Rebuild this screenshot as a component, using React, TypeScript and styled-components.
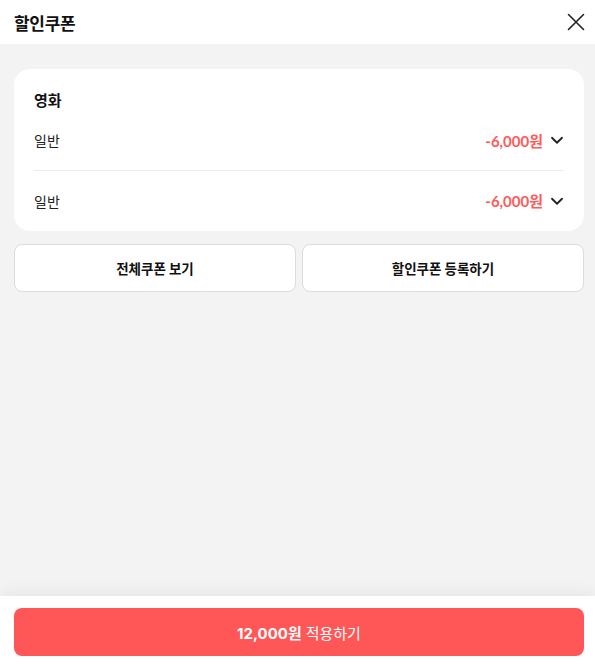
import styled, { createGlobalStyle } from "styled-components";

const GlobalStyle = createGlobalStyle`
  html, body {
    margin: 0;
    padding: 0;
  }
  body {
    font-family: "Inter", "Noto Sans CJK KR", sans-serif;
    color: #111;
  }
  * {
    box-sizing: border-box;
  }
`;

const Page = styled.div`
  width: 595px;
  height: 666px;
  display: flex;
  flex-direction: column;
  background: #f3f3f3;
`;

const Header = styled.div`
  height: 44px;
  background: #fff;
  display: flex;
  align-items: center;
  justify-content: space-between;
  padding: 0 7px 0 14px;
`;

const Title = styled.h1`
  margin: 0;
  font-size: 17px;
  font-weight: 700;
  font-family: "Noto Sans CJK KR", sans-serif;
  letter-spacing: -0.3px;
`;

const CloseButton = styled.button`
  border: none;
  background: none;
  padding: 0;
  width: 24px;
  height: 24px;
  display: flex;
  align-items: center;
  justify-content: center;
  cursor: pointer;
  color: #222;
`;

const Content = styled.div`
  flex: 1;
  padding: 25px 11px 0 14px;
  display: flex;
  flex-direction: column;
  gap: 13px;
`;

const Card = styled.div`
  background: #fff;
  border-radius: 16px;
  padding: 19px 20px 1px;
`;

const CardTitle = styled.div`
  height: 22px;
  display: flex;
  align-items: center;
  font-size: 15px;
  font-weight: 700;
  font-family: "Noto Sans CJK KR", sans-serif;
`;

const Row = styled.div<{ $divider?: boolean }>`
  height: 60px;
  display: flex;
  align-items: center;
  justify-content: space-between;
  border-top: ${(p) => (p.$divider ? "1px solid #ececec" : "none")};
`;

const Label = styled.span`
  font-size: 14px;
  font-family: "Noto Sans CJK KR", sans-serif;
  color: #222;
`;

const Price = styled.span`
  display: flex;
  align-items: center;
  gap: 7px;
  font-family: "Lato", "Noto Sans CJK KR", sans-serif;
  font-weight: 700;
  font-size: 15px;
  color: #ff5a5a;
`;

const ButtonRow = styled.div`
  display: grid;
  grid-template-columns: 1fr 1fr;
  gap: 6px;
`;

const OutlineButton = styled.button`
  height: 48px;
  background: #fff;
  border: 1px solid #dcdcdc;
  border-radius: 8px;
  font-family: "Noto Sans CJK KR", sans-serif;
  font-size: 13.5px;
  font-weight: 700;
  color: #111;
  cursor: pointer;
`;

const Footer = styled.div`
  height: 70px;
  background: #fff;
  padding: 12px 11px 10px 14px;
  box-shadow: 0 -4px 14px rgba(0, 0, 0, 0.05);
`;

const ApplyButton = styled.button`
  width: 100%;
  height: 48px;
  border: none;
  border-radius: 8px;
  background: #ff5757;
  color: #fff;
  font-family: "Inter", "Noto Sans CJK KR", sans-serif;
  font-size: 15px;
  cursor: pointer;
  display: flex;
  align-items: center;
  justify-content: center;
  gap: 4px;

  strong {
    font-weight: 700;
  }
  span {
    font-family: "Noto Sans CJK KR", sans-serif;
    font-weight: 400;
  }
`;

const Chevron = () => (
  <svg width="14" height="14" viewBox="0 0 14 14" fill="none" stroke="#222" strokeWidth="1.8" strokeLinecap="round" strokeLinejoin="round">
    <path d="M2 4.75L7 9.75l5-5" />
  </svg>
);

const coupons = [
  { id: 1, label: "일반", amount: "-6,000원" },
  { id: 2, label: "일반", amount: "-6,000원" },
];

export default function App() {
  return (
    <>
      <GlobalStyle />
      <Page>
        <Header>
          <Title>할인쿠폰</Title>
          <CloseButton aria-label="닫기">
            <svg width="20" height="20" viewBox="0 0 20 20" fill="none" stroke="#222" strokeWidth="1.6" strokeLinecap="round">
              <path d="M2.5 2.5l15 15M17.5 2.5l-15 15" />
            </svg>
          </CloseButton>
        </Header>
        <Content>
          <Card>
            <CardTitle>영화</CardTitle>
            {coupons.map((c, i) => (
              <Row key={c.id} $divider={i > 0}>
                <Label>{c.label}</Label>
                <Price>
                  {c.amount}
                  <Chevron />
                </Price>
              </Row>
            ))}
          </Card>
          <ButtonRow>
            <OutlineButton>전체쿠폰 보기</OutlineButton>
            <OutlineButton>할인쿠폰 등록하기</OutlineButton>
          </ButtonRow>
        </Content>
        <Footer>
          <ApplyButton>
            <strong>12,000원</strong>
            <span>적용하기</span>
          </ApplyButton>
        </Footer>
      </Page>
    </>
  );
}
